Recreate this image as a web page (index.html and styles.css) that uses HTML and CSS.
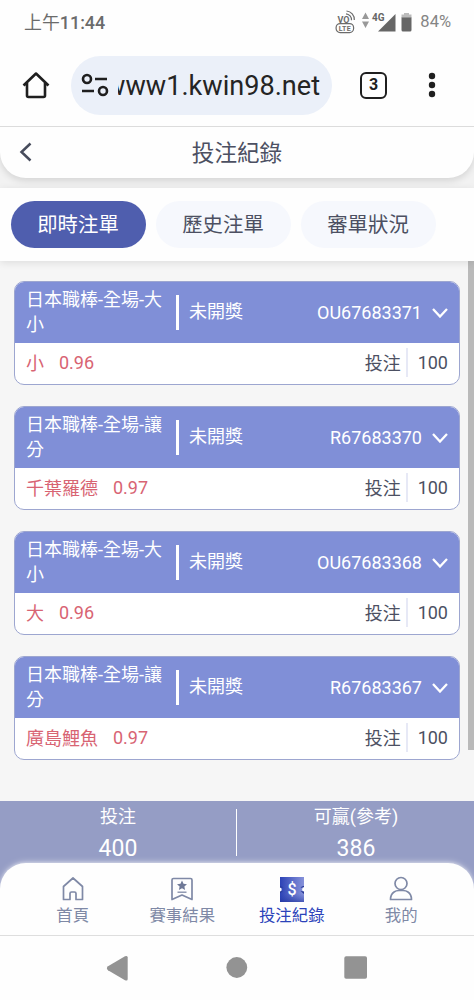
FILE: index.html
```html
<!DOCTYPE html>
<html lang="zh-Hant">
<head>
<meta charset="utf-8">
<meta name="viewport" content="width=device-width, initial-scale=1">
<title>投注紀錄</title>
<link rel="stylesheet" href="styles.css">
</head>
<body>
<div class="phone">
  <div class="status">
    <span class="clock">上午<b>11:44</b></span>
    <svg class="status-icons" width="80" height="26" viewBox="0 0 80 26">
      <g fill="none" stroke="#6b6b6b" stroke-width="1.2">
        <rect x="1.100" y="14.600" width="17.500" height="9" rx="4"/>
        <path d="M11 4.800a6 6 0 0 1 5.500 6.500M11.500 2a8.500 8.500 0 0 1 7.800 9"/>
      </g>
      <text class="tiny" x="2.500" y="13.500">VO</text>
      <text class="lte" x="3.800" y="22">LTE</text>
      <path fill="#999" d="M27 10l3.500-6.500L34 10zM27 12.500h7L30.500 19z"/>
      <text class="gen" x="37" y="11.500">4G</text>
      <path fill="#666" d="M43 22.500L60.500 5v17.500z"/>
      <path fill="#bbb" d="M69 4h5v1.500h2.500v3.500h-10V5.500h2.500z"/>
      <path fill="#666" d="M66.500 8.500h10V21q0 1.500-1.500 1.500h-7q-1.500 0-1.500-1.500z"/>
    </svg>
    <span class="battery">84%</span>
  </div>
  <div class="browser">
    <svg class="b-home" width="28" height="28" viewBox="0 0 28 28" fill="none" stroke="#1f1f1f" stroke-width="2.600" stroke-linejoin="round"><path d="M1.500 14.500L14 2.500l12.500 12M5 12V24.500q0 1.500 1.500 1.500h15q1.500 0 1.500-1.500V12"/></svg>
    <div class="url">
      <svg width="28" height="24" viewBox="0 0 28 24" fill="none" stroke="#1f1f1f" stroke-width="2.600"><circle cx="6" cy="6" r="4"/><path d="M14 6h12M1 18h12"/><circle cx="22" cy="18" r="4"/></svg>
      <div class="url-clip"><span>www1.kwin98.net</span></div>
    </div>
    <div class="tabs-count">3</div>
    <svg class="dots" width="8" height="26" viewBox="0 0 8 26" fill="#1f1f1f"><circle cx="4" cy="4" r="3.200"/><circle cx="4" cy="13" r="3.200"/><circle cx="4" cy="22" r="3.200"/></svg>
  </div>
  <header class="title-bar">
    <svg class="back" width="14" height="20" viewBox="0 0 14 20" fill="none" stroke="#474c5c" stroke-width="2.500"><path d="M11.500 1.500L2.500 10l9 8.500"/></svg>
    <h1>投注紀錄</h1>
  </header>
  <div class="filters">
    <button class="pill active">即時注單</button>
    <button class="pill">歷史注單</button>
    <button class="pill">審單狀況</button>
  </div>
  <main class="list">
    <div class="thumb"></div>
    <article class="card">
      <div class="card-head"><div class="kind">日本職棒-全場-大小</div><span class="state">未開獎</span><span class="num">OU67683371</span><svg class="chev" viewBox="0 0 16 10"><path d="M1 1l7 7.500L15 1"/></svg></div>
      <div class="card-body"><span>小</span><span class="odds">0.96</span><span class="label">投注</span><span class="amount">100</span></div>
    </article>
    <article class="card">
      <div class="card-head"><div class="kind">日本職棒-全場-讓分</div><span class="state">未開獎</span><span class="num">R67683370</span><svg class="chev" viewBox="0 0 16 10"><path d="M1 1l7 7.500L15 1"/></svg></div>
      <div class="card-body"><span>千葉羅德</span><span class="odds">0.97</span><span class="label">投注</span><span class="amount">100</span></div>
    </article>
    <article class="card">
      <div class="card-head"><div class="kind">日本職棒-全場-大小</div><span class="state">未開獎</span><span class="num">OU67683368</span><svg class="chev" viewBox="0 0 16 10"><path d="M1 1l7 7.500L15 1"/></svg></div>
      <div class="card-body"><span>大</span><span class="odds">0.96</span><span class="label">投注</span><span class="amount">100</span></div>
    </article>
    <article class="card">
      <div class="card-head"><div class="kind">日本職棒-全場-讓分</div><span class="state">未開獎</span><span class="num">R67683367</span><svg class="chev" viewBox="0 0 16 10"><path d="M1 1l7 7.500L15 1"/></svg></div>
      <div class="card-body"><span>廣島鯉魚</span><span class="odds">0.97</span><span class="label">投注</span><span class="amount">100</span></div>
    </article>
  </main>
  <section class="summary">
    <div class="sum"><span>投注</span><strong>400</strong></div>
    <div class="rule"></div>
    <div class="sum"><span>可贏(參考)</span><strong>386</strong></div>
  </section>
  <nav class="nav">
    <a class="item"><svg width="26" height="26" viewBox="0 0 26 26" fill="none" stroke="#7f89a6" stroke-width="1.700" stroke-linejoin="round"><path d="M3.500 10.500L13 2l9.500 8.500V23.500H16V17.500q0-1.500-1.500-1.500h-3q-1.500 0-1.500 1.500v6H3.500z"/></svg>首頁</a>
    <a class="item"><svg width="26" height="26" viewBox="0 0 26 26" fill="none" stroke="#7f89a6" stroke-width="1.700" stroke-linejoin="round"><path d="M4.500 2.500h17q1.500 0 1.500 1.500v19.500l-10-4.500-10 4.500V4q0-1.500 1.500-1.500z"/><path d="M8.500 16.200h9" stroke-width="1.300"/><path fill="#6f7997" stroke="none" d="M13 4.500l1.500 3.300 3.500.4-2.600 2.400.7 3.500-3.100-1.800-3.100 1.800.7-3.500L8 8.200l3.500-.4z"/></svg>賽事結果</a>
    <a class="item current"><svg width="26" height="26" viewBox="0 0 26 26"><defs><linearGradient id="ticket"><stop offset="0" stop-color="#2c43b6"/><stop offset="1" stop-color="#8792da"/></linearGradient><linearGradient id="ticket-shade" x2="0" y2="1"><stop offset="0" stop-color="#2941b5" stop-opacity="0"/><stop offset="1" stop-color="#20349b" stop-opacity=".6"/></linearGradient></defs><path fill="url(#ticket)" d="M1 1h24v10a2.600 2.600 0 0 0 0 5v10H1V16a2.700 2.700 0 0 0 0-5z"/><path fill="url(#ticket-shade)" d="M1 18h24v8H1z"/><path fill="#263894" d="M1 10.200l3.500 1-3.500.6zM25 10a3.600 3.600 0 0 0-3.500 2l3.500-1zM1 15.500l3-.5-3 2zM25 15.500l-3.500-.5L25 18z"/><text class="dollar" x="13" y="18.500">$</text></svg>投注紀錄</a>
    <a class="item"><svg width="26" height="26" viewBox="0 0 26 26" fill="none" stroke="#7f89a6" stroke-width="1.700" stroke-linejoin="round"><circle cx="13" cy="7.500" r="6"/><path d="M2.500 23.500q0-5 3.500-7.500 2-1.500 5-1.500h4q3 0 5 1.500 3.500 2.500 3.500 7.500z"/></svg>我的</a>
  </nav>
  <footer class="system">
    <svg width="474" height="64" viewBox="0 0 474 64" fill="#939393"><path d="M108 30.200l17-9.900q2.700-1.200 2.700 1.200v21.500q0 2.400-2.700 1.200l-17-10q-2.300-2 0-4z"/><circle cx="236.800" cy="31.500" r="10.400"/><rect x="344.300" y="20.300" width="22.700" height="22.500" rx="1.800"/></svg>
  </footer>
</div>
</body>
</html>
```
FILE: styles.css
```css
* { box-sizing: border-box; }
body {
  margin: 0;
  background: #fefefe;
  font-family: Roboto, "Noto Sans CJK TC", sans-serif;
  color: #4c5062;
}
.phone { width: 474px; height: 1000px; display: flex; flex-direction: column; overflow: hidden; }
.status { height: 45px; flex: none; display: flex; align-items: center; padding: 0 23px 2px 24px; color: #6b6b6b; font-size: 17.9px; }
.clock { flex: 1; padding-bottom: 2px; }
.clock b { font-weight: 500; }
.status-icons { margin: 0 5px 0 0; }
.battery { font-size: 16.5px; color: #858585; }
.tiny { font: 700 9px Roboto, sans-serif; fill: #6b6b6b; }
.lte { font: 700 7px Roboto, sans-serif; fill: #6b6b6b; letter-spacing: 0.3px; }
.gen { font: 700 10px Roboto, sans-serif; fill: #666; }
.browser { height: 82px; flex: none; display: flex; align-items: center; padding: 1px 38px 2px 22px; border-bottom: 1px solid #dcdcdc; }
.b-home { margin-right: 21px; }
.url { width: 261px; height: 59px; border-radius: 30px; background: #ebf0f9; display: flex; align-items: center; padding-left: 10px; margin-right: 28px; }
.url-clip { width: 202px; margin: 2px 0 0 9px; overflow: hidden; display: flex; justify-content: flex-end; font-size: 27.1px; line-height: 34px; color: #242424; }
.tabs-count { width: 27px; height: 27px; border: 2.6px solid #1f1f1f; border-radius: 6px; font-size: 16px; font-weight: 700; color: #1f1f1f; line-height: 22px; text-align: center; }
.dots { margin-left: auto; }
.title-bar { height: 51px; flex: none; display: flex; align-items: center; justify-content: center; padding-top: 2px; border-radius: 0 0 26px 26px; background: #fefefe; box-shadow: 0 3px 7px #0000001f, 0 0 0 30px #f2f2f2; clip-path: inset(0 0 -10px 0); position: relative; }
.title-bar h1 { margin: 0; font-size: 22.6px; font-weight: 400; line-height: 34px; }
.back { position: absolute; left: 19px; top: 15px; }
.filters { height: 73px; margin-top: 10px; flex: none; display: flex; gap: 10px; align-items: center; padding: 0 10.5px; background: #fefefe; box-shadow: 0 2px 8px #0000001a; position: relative; z-index: 1; }
.pill { width: 135px; height: 47px; padding: 0 0 4px; border: 0; border-radius: 24px; background: #f6f8fd; font: inherit; font-size: 20.4px; color: #4c5062; }
.pill.active { background: #4f5eae; color: #fff; }
.list { height: 540px; flex: none; position: relative; background: #f6f6f6; padding: 20px 14px; display: flex; flex-direction: column; gap: 21px; }
.thumb { position: absolute; right: 0; top: 0; width: 6px; height: 489px; background: #bababa; }
.card { height: 104px; border: 1px solid #9da6d0; border-radius: 10px; background: #fff; overflow: hidden; font-size: 18px; }
.card-head { height: 61px; display: flex; align-items: center; background: #808fd7; color: #fff; padding: 0 11px 0 11px; }
.kind { width: 138px; line-height: 25px; word-break: break-all; padding-bottom: 1px; }
.state { border-left: 3px solid #fff; height: 35px; line-height: 34px; margin-left: 12px; padding-left: 10px; }
.num { margin-left: auto; padding-bottom: 1px; }
.chev { width: 16px; height: 10px; margin-left: 10px; fill: none; stroke: #fff; stroke-width: 2.3; }
.card-body { height: 41px; display: flex; align-items: center; padding: 0 11px 3px; color: #d86473; }
.odds { margin-left: 15px; }
.label { margin-left: auto; color: #4c5062; }
.amount { height: 29px; line-height: 29px; margin-left: 5px; padding-left: 10px; border-left: 2px solid #e7e9f6; color: #4c5062; }
.summary { height: 92px; margin-bottom: -30px; flex: none; display: flex; background: #959dc5; color: #fff; }
.sum { flex: 1; display: flex; flex-direction: column; align-items: center; font-size: 18px; line-height: 32px; }
.sum strong { font-size: 23px; font-weight: 400; line-height: 31px; }
.rule { width: 1px; height: 47px; margin: 8px 1px 0 0; background: #fff; }
.nav { height: 73px; flex: none; position: relative; display: flex; padding: 0 18px; border-radius: 26px 26px 0 0; background: #fefefe; box-shadow: 0 -1px 6px #ffffff73, 0 -1px 3px #ffffff55; border-bottom: 1px solid #dedede; }
.item { flex: 1; display: flex; flex-direction: column; align-items: center; padding-top: 13px; font-size: 16.4px; line-height: 28px; color: #7f89a6; }
.item.current { color: #2b43ba; }
.dollar { font: 500 16px Roboto, sans-serif; fill: #fff; text-anchor: middle; }
.system { height: 64px; flex: none; }
.system svg { display: block; }
```
